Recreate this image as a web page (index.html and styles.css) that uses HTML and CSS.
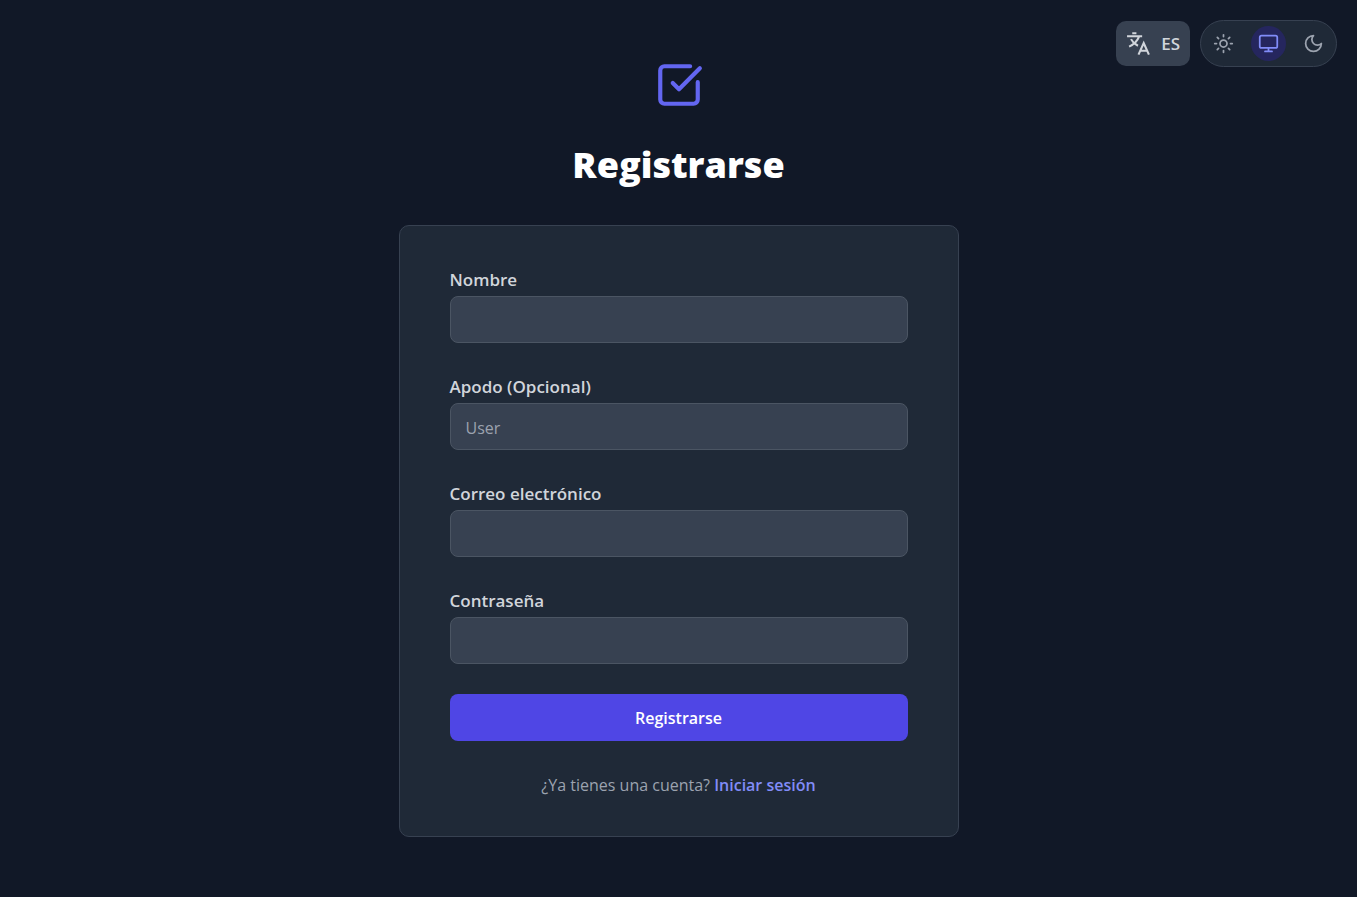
FILE: index.html
```html
<!DOCTYPE html>
<html lang="es">
<head>
  <meta charset="UTF-8" />
  <meta name="viewport" content="width=device-width, initial-scale=1.0"/>
  <title>Registrarse</title>
  <link rel="stylesheet" href="styles.css">
</head>
<body>
  <div class="toolbar">
    <button type="button" class="lang-btn" aria-label="Cambiar idioma">
      <svg class="lang-icon" viewBox="0 0 24 24" aria-hidden="true">
        <path d="M1 5h14.500M6 2.200h4M12.500 5.500C11 9.500 7.500 13 3 15M4.800 7.800c1.400 2.700 3.400 4.800 6.700 6.400"/>
        <path d="M12 22.700l5-11.200 5 11.200M13.800 19h6.400"/>
      </svg>
      <span>ES</span>
    </button>
    <div class="theme-switch" role="group" aria-label="Tema">
      <button type="button" class="theme-btn" aria-label="Claro">
        <svg viewBox="0 0 24 24" aria-hidden="true">
          <circle cx="12" cy="12" r="4"/>
          <path d="M12 2v2M12 20v2M4.93 4.93l1.41 1.41M17.66 17.66l1.41 1.41M2 12h2M20 12h2M6.34 17.66l-1.41 1.41M19.07 4.93l-1.41 1.41"/>
        </svg>
      </button>
      <button type="button" class="theme-btn active" aria-label="Sistema">
        <svg viewBox="0 0 24 24" aria-hidden="true">
          <rect x="2" y="3" width="20" height="14" rx="2"/>
          <path d="M8 21h8M12 17v4"/>
        </svg>
      </button>
      <button type="button" class="theme-btn" aria-label="Oscuro">
        <svg viewBox="0 0 24 24" aria-hidden="true">
          <path d="M12 3a6 6 0 0 0 9 9 9 9 0 1 1-9-9Z"/>
        </svg>
      </button>
    </div>
  </div>

  <main class="container">
    <svg class="logo" viewBox="0 0 24 24" aria-hidden="true">
      <path d="M21 10.656V19a2 2 0 0 1-2 2H5a2 2 0 0 1-2-2V5a2 2 0 0 1 2-2h12.344"/>
      <path d="m9 11 3 3L22 4"/>
    </svg>
    <h1>Registrarse</h1>

    <div class="card">
      <form>
        <div class="field">
          <label for="name">Nombre</label>
          <input type="text" id="name" name="name">
        </div>
        <div class="field">
          <label for="nickname">Apodo (Opcional)</label>
          <input type="text" id="nickname" name="nickname" placeholder="User">
        </div>
        <div class="field">
          <label for="email">Correo electrónico</label>
          <input type="email" id="email" name="email">
        </div>
        <div class="field">
          <label for="password">Contraseña</label>
          <input type="password" id="password" name="password">
        </div>
        <button type="submit" class="submit-btn">Registrarse</button>
      </form>
      <p class="login-text">¿Ya tienes una cuenta? <a href="#">Iniciar sesión</a></p>
    </div>
  </main>
</body>
</html>
```
FILE: styles.css
```css
* {
  box-sizing: border-box;
}

body {
  margin: 0;
  min-height: 100vh;
  font-family: 'Segoe UI', 'Open Sans', 'Noto Sans', sans-serif;
  font-size: 16px;
  line-height: 25px;
  background-color: #111827;
  color: #d1d5db;
}

button,
input {
  font: inherit;
}

svg {
  display: block;
}

/* language + theme controls, over the page */
.toolbar {
  position: absolute;
  top: 20px;
  right: 20px;
  display: flex;
  align-items: center;
  gap: 10px;
}

.lang-btn {
  display: flex;
  align-items: center;
  gap: 10px;
  height: 45px;
  padding: 0 10px;
  border: none;
  border-radius: 10px;
  background-color: #374151;
  color: #d1d5db;
  font-size: 17px;
  font-weight: 600;
  cursor: pointer;
}

.lang-icon {
  width: 25px;
  height: 25px;
  fill: none;
  stroke: currentColor;
  stroke-width: 2;
}

.theme-switch {
  display: flex;
  gap: 10px;
  padding: 5px;
  border: 1px solid #374151;
  border-radius: 24px;
  background-color: #1f2937;
}

.theme-btn {
  padding: 7px;
  border: none;
  border-radius: 50%;
  background: none;
  color: #9ca3af;
  cursor: pointer;
}

.theme-btn svg {
  width: 21px;
  height: 21px;
}

.theme-btn svg,
.logo {
  fill: none;
  stroke: currentColor;
  stroke-width: 2;
  stroke-linecap: round;
  stroke-linejoin: round;
}

.theme-btn.active {
  background-color: #25265e;
  color: #818cf8;
}

.container {
  max-width: 560px;
  margin: 0 auto;
  padding: 60px 0;
}

.logo {
  width: 50px;
  height: 50px;
  margin: 0 auto;
  color: #6366f1;
}

h1 {
  margin: 31px 0 37px;
  font-size: 36px;
  line-height: 47px;
  font-weight: 800;
  text-align: center;
  color: #ffffff;
}

.card {
  padding: 40px 50px 38px;
  border: 1px solid #374151;
  border-radius: 10px;
  background-color: #1f2937;
}

.field {
  margin-bottom: 30px;
}

label {
  display: block;
  margin-bottom: 3px;
  font-size: 17px;
  line-height: 27px;
  font-weight: 600;
}

.field input {
  display: block;
  width: 100%;
  height: 47px;
  padding: 2px 15px 0;
  border: 1px solid #4b5563;
  border-radius: 8px;
  background-color: #374151;
  color: #ffffff;
}

.field input::placeholder {
  color: #9ca3af;
}

.submit-btn {
  display: block;
  width: 100%;
  height: 47px;
  padding: 2px 15px 0;
  border: none;
  border-radius: 8px;
  background-color: #4f46e5;
  color: #ffffff;
  font-weight: 600;
  cursor: pointer;
}

.submit-btn:hover {
  background-color: #4338ca;
}

.login-text {
  margin: 32px 0 0;
  text-align: center;
  color: #9ca3af;
}

.login-text a {
  color: #818cf8;
  font-weight: 600;
  text-decoration: none;
}
```
